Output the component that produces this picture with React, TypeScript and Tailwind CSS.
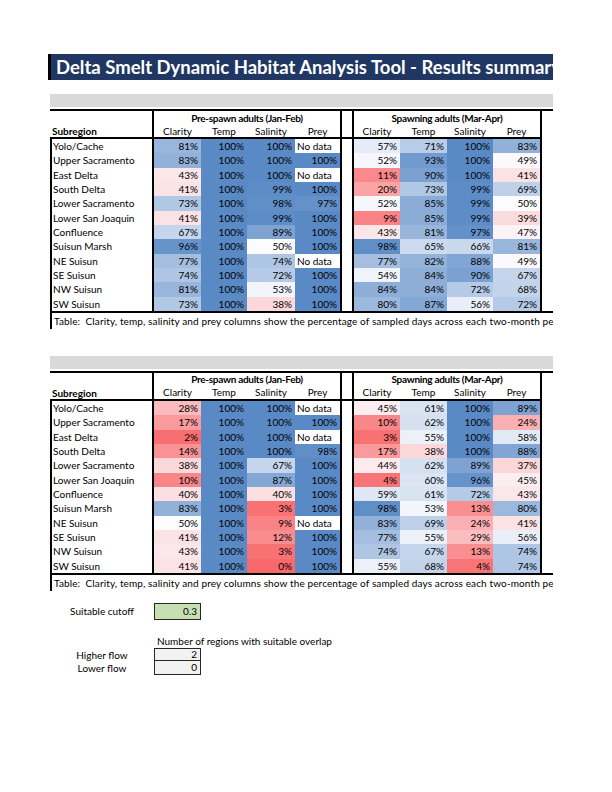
import React from "react";

type Val = number | null;
type Row = [string, Val, Val, Val, Val, Val, Val, Val, Val];

const T1: Row[] = [
  ["Yolo/Cache", 81, 100, 100, null, 57, 71, 100, 83],
  ["Upper Sacramento", 83, 100, 100, 100, 52, 93, 100, 49],
  ["East Delta", 43, 100, 100, null, 11, 90, 100, 41],
  ["South Delta", 41, 100, 99, 100, 20, 73, 99, 69],
  ["Lower Sacramento", 73, 100, 98, 97, 52, 85, 99, 50],
  ["Lower San Joaquin", 41, 100, 99, 100, 9, 85, 99, 39],
  ["Confluence", 67, 100, 89, 100, 43, 81, 97, 47],
  ["Suisun Marsh", 96, 100, 50, 100, 98, 65, 66, 81],
  ["NE Suisun", 77, 100, 74, null, 77, 82, 88, 49],
  ["SE Suisun", 74, 100, 72, 100, 54, 84, 90, 67],
  ["NW Suisun", 81, 100, 53, 100, 84, 84, 72, 68],
  ["SW Suisun", 73, 100, 38, 100, 80, 87, 56, 72],
];

const T2: Row[] = [
  ["Yolo/Cache", 28, 100, 100, null, 45, 61, 100, 89],
  ["Upper Sacramento", 17, 100, 100, 100, 10, 62, 100, 24],
  ["East Delta", 2, 100, 100, null, 3, 55, 100, 58],
  ["South Delta", 14, 100, 100, 98, 17, 38, 100, 88],
  ["Lower Sacramento", 38, 100, 67, 100, 44, 62, 89, 37],
  ["Lower San Joaquin", 10, 100, 87, 100, 4, 60, 96, 45],
  ["Confluence", 40, 100, 40, 100, 59, 61, 72, 43],
  ["Suisun Marsh", 83, 100, 3, 100, 98, 53, 13, 80],
  ["NE Suisun", 50, 100, 9, null, 83, 69, 24, 41],
  ["SE Suisun", 41, 100, 12, 100, 77, 55, 29, 56],
  ["NW Suisun", 43, 100, 3, 100, 74, 67, 13, 74],
  ["SW Suisun", 41, 100, 0, 100, 55, 68, 4, 74],
];

const PRE = ["w-[47px]", "w-[46px]", "w-[48px]", "w-[45px]"];
const SPAWN = ["w-[46px]", "w-[47px]", "w-[46px]", "w-[47px]"];
const HEAD = ["Clarity", "Temp", "Salinity", "Prey"];

function scale(v: number): string {
  let r: number, g: number, b: number;
  if (v <= 50) {
    const t = v / 50;
    r = 248 + (252 - 248) * t;
    g = 105 + (252 - 105) * t;
    b = 107 + (255 - 107) * t;
  } else {
    const t = (v - 50) / 50;
    r = 252 + (90 - 252) * t;
    g = 252 + (138 - 252) * t;
    b = 255 + (198 - 255) * t;
  }
  return `rgb(${Math.round(r)},${Math.round(g)},${Math.round(b)})`;
}

function Cell({ v, w }: { v: Val; w: string }) {
  if (v === null) {
    return (
      <div className={`${w} h-full flex items-center pl-[2px] bg-white whitespace-nowrap`}>
        No data
      </div>
    );
  }
  return (
    <div
      className={`${w} h-full flex items-center justify-end pr-[3px]`}
      style={{ backgroundColor: scale(v) }}
    >
      {v}%
    </div>
  );
}

function Table({ rows }: { rows: Row[] }) {
  return (
    <div className="flex flex-col">
      <div className="h-[13px] bg-[#d9d9d9]" />
      <div className="mt-[2px] flex border-t-2 border-black">
        <div className="w-[104px] h-[28px] border-r-2 border-b-2 border-black flex items-end pl-[2px] pb-[1px] font-bold">
          Subregion
        </div>
        <div className="w-[186px] h-[28px] border-b-2 border-black flex flex-col">
          <div className="h-[13px] flex items-center justify-center font-bold tracking-[-0.3px]">
            Pre-spawn adults (Jan-Feb)
          </div>
          <div className="h-[13px] flex">
            {HEAD.map((h, i) => (
              <div key={h} className={`${PRE[i]} flex items-center justify-center`}>
                {h}
              </div>
            ))}
          </div>
        </div>
        <div className="w-[14px] h-[28px] border-l-2 border-r-2 border-b-2 border-black" />
        <div className="w-[186px] h-[28px] border-b-2 border-black flex flex-col">
          <div className="h-[13px] flex items-center justify-center font-bold tracking-[-0.3px]">
            Spawning adults (Mar-Apr)
          </div>
          <div className="h-[13px] flex">
            {HEAD.map((h, i) => (
              <div key={h} className={`${SPAWN[i]} flex items-center justify-center`}>
                {h}
              </div>
            ))}
          </div>
        </div>
        <div className="w-[13px] h-[28px] border-l-2 border-black" />
      </div>
      <div className="flex flex-col border-b-2 border-black">
        {rows.map((r) => (
          <div key={r[0]} className="flex h-[14.33px]">
            <div className="w-[104px] h-full border-l-2 border-r-2 border-black flex items-center pl-[1px] whitespace-nowrap">
              {r[0]}
            </div>
            {[1, 2, 3, 4].map((k, i) => (
              <Cell key={k} v={r[k] as Val} w={PRE[i]} />
            ))}
            <div className="w-[14px] h-full border-l-2 border-r-2 border-black" />
            {[5, 6, 7, 8].map((k, i) => (
              <Cell key={k} v={r[k] as Val} w={SPAWN[i]} />
            ))}
            <div className="w-[13px] h-full border-l-2 border-black" />
          </div>
        ))}
      </div>
      <div className="h-[16px] border-l-2 border-black flex items-center pl-[2px] whitespace-nowrap overflow-hidden tracking-[0.12px]">
        Table:&nbsp; Clarity, temp, salinity and prey columns show the percentage of sampled days across each two-month period
      </div>
    </div>
  );
}

export default function App() {
  return (
    <div className="w-[612px] h-[792px] bg-white pt-[54px] pl-[48px] font-['Lato',sans-serif] text-[10px] text-black leading-none">
      <div className="w-[505px] h-[26px] bg-[#203764] border-l-[3px] border-black overflow-hidden whitespace-nowrap pl-[5px] flex items-center text-white font-bold text-[18.5px]">
        Delta Smelt Dynamic Habitat Analysis Tool - Results summary
      </div>
      <div className="ml-[2px] w-[503px] overflow-hidden flex flex-col">
        <div className="mt-[14px]">
          <Table rows={T1} />
        </div>
        <div className="mt-[27px]">
          <Table rows={T2} />
        </div>
        <div className="mt-[12px] flex h-[17px]">
          <div className="w-[104px] flex items-center justify-center">Suitable cutoff</div>
          <div className="w-[47px] h-full bg-[#c6e0b4] border-[1.5px] border-[#262626] flex items-center justify-end pr-[3px]">
            0.3
          </div>
        </div>
        <div className="mt-[15px] h-[13px] flex items-center pl-[107px] whitespace-nowrap">
          Number of regions with suitable overlap
        </div>
        <div className="flex">
          <div className="w-[104px] flex flex-col">
            <div className="h-[13.5px] flex items-center justify-center">Higher flow</div>
            <div className="h-[13.5px] flex items-center justify-center">Lower flow</div>
          </div>
          <div className="w-[47px] flex flex-col border-[1.5px] border-[#262626] bg-[#f2f2f2]">
            <div className="h-[12px] flex items-center justify-end pr-[3px] border-b border-[#262626]">2</div>
            <div className="h-[12px] flex items-center justify-end pr-[3px]">0</div>
          </div>
        </div>
      </div>
    </div>
  );
}
